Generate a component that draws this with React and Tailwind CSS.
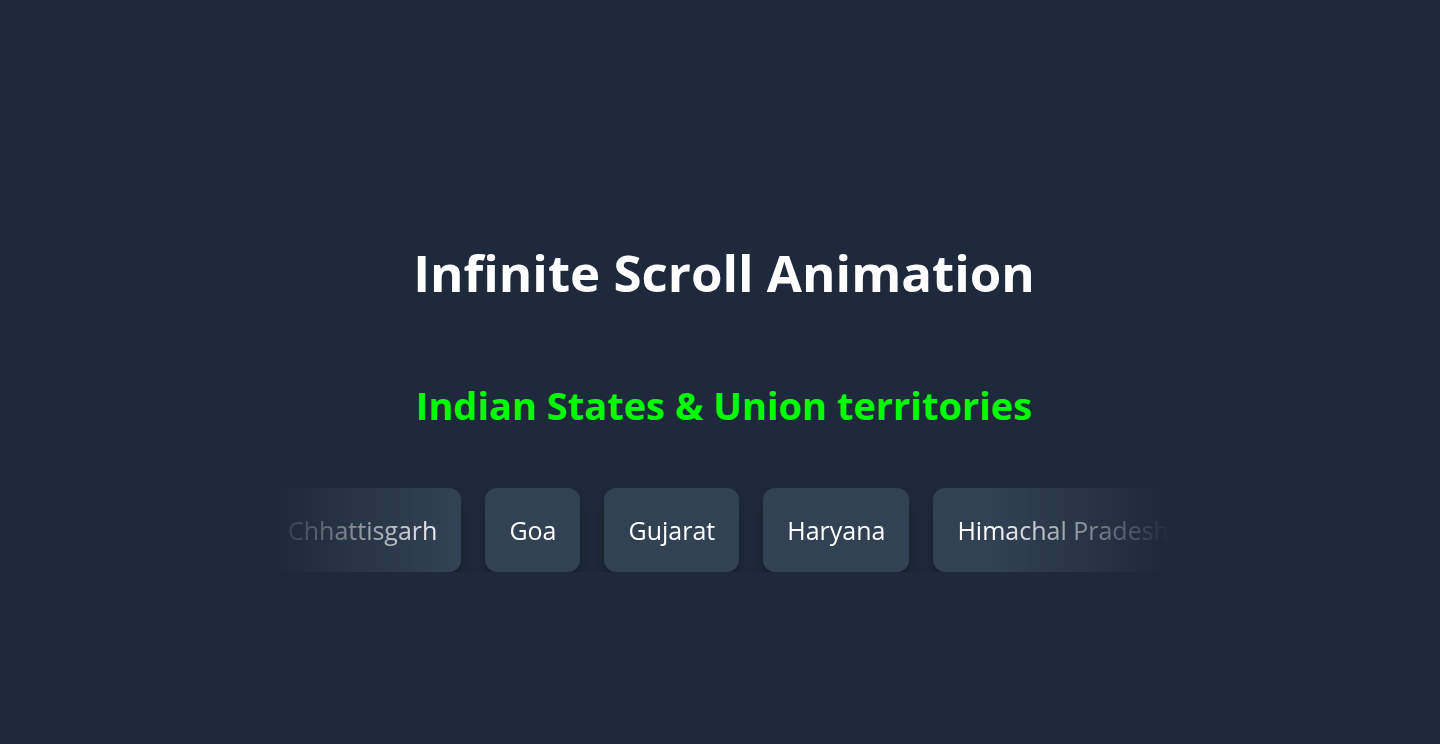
import React from 'react';

const states = ['Chhattisgarh', 'Goa', 'Gujarat', 'Haryana', 'Himachal Pradesh'];

export default function App() {
    return (
        <div className="min-h-screen bg-[#1e293b] flex flex-col items-center pt-[240px] font-['Open_Sans',sans-serif]">
            <h1 className="ml-2 text-[51px] leading-[64px] font-bold text-white">Infinite Scroll Animation</h1>
            <h2 className="ml-2 mt-[79px] text-[38px] leading-[45px] font-bold text-[#00ff00]">Indian States &amp; Union territories</h2>

            {/* scroller: fades on both sides */}
            <div className="mt-[60px] w-[900px] overflow-hidden [mask-image:linear-gradient(90deg,transparent,white_20%,white_80%,transparent)]">
                <ul className="flex gap-6 w-max py-5 -my-5 -ml-[6px]">
                    {states.map((s) => (
                        <li key={s} className="bg-[#334155] text-white text-[25px] leading-9 px-6 py-6 rounded-xl shadow-[0_10px_15px_-3px_rgba(0,0,0,0.35),0_4px_6px_-4px_rgba(0,0,0,0.35)]">
                            {s}
                        </li>
                    ))}
                </ul>
            </div>
        </div>
    );
}
